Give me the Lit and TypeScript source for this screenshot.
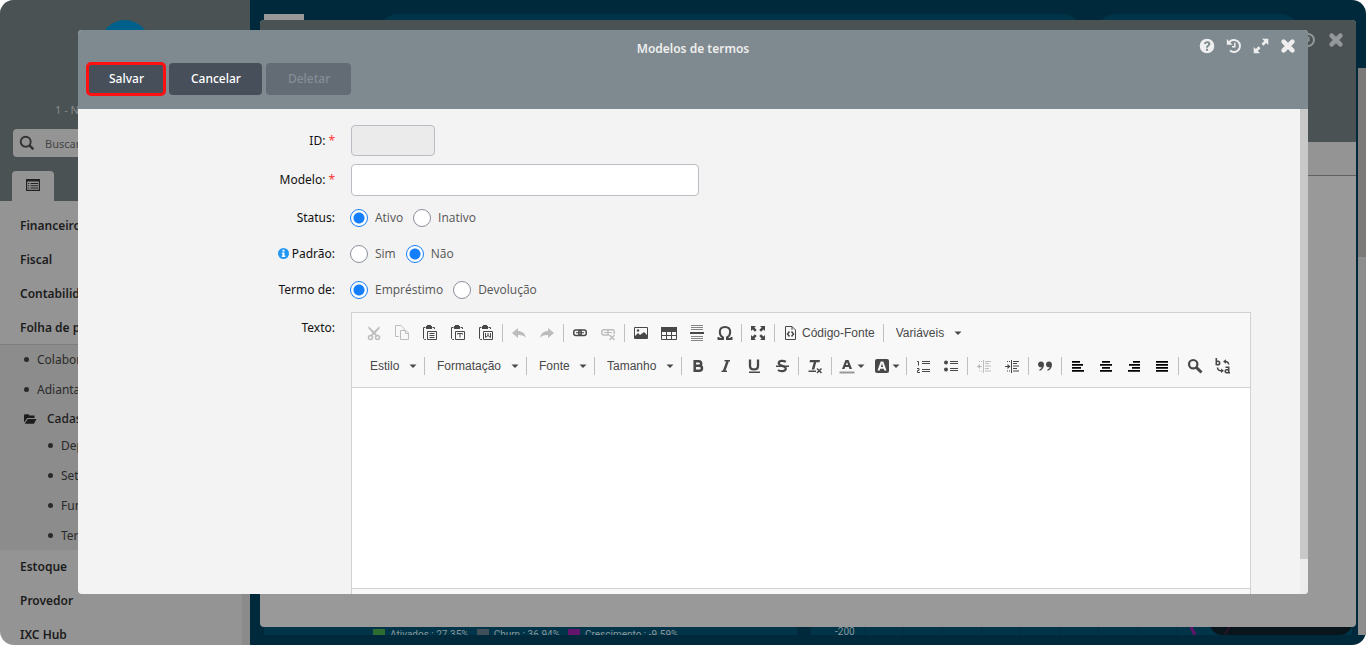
import { LitElement, html, css, svg, nothing, TemplateResult } from "lit";
import { customElement, property, state } from "lit/decorators.js";
import { classMap } from "lit/directives/class-map.js";

const glyphs: Record<string, TemplateResult> = {
  cut: svg`<g fill="none" stroke="currentColor" stroke-width="1.5"><circle cx="4.5" cy="12.5" r="2"/><circle cx="11.5" cy="12.5" r="2"/></g><path fill="currentColor" d="M2.5 1v2.4l4 4.6-2.3 3 1.4.6L8 9.2l2.4 2.4 1.4-.6L9.500 8l4-4.600V1L8 6.400z"/>`,
  copy: svg`<path fill="none" stroke="currentColor" d="M5 11.500H1.500v-11H7L10 3.500V5M6.500 5.500v9h8V8l-2.500-2.500zM11.500 5.500v3h3"/>`,
  paste: svg`<path fill="none" stroke="currentColor" d="M2.500 14.500H4M3.500 2.500h-2v11l1 1M10.500 2.500h2V4M5.500 6.500h9v8h-9zM7.500 8.500h5M7.500 10.500h5M7.500 12.500h5"/><path fill="currentColor" d="M4 1h1V0h4v1h1v3H4z"/>`,
  pasteText: svg`<path fill="none" stroke="currentColor" d="M2.500 14.500H4M3.500 2.500h-2v11l1 1M10.500 2.500h2V4M5.500 6.500h9v8h-9zM7.500 9.500v-1h5v1M10 8.500v4"/><path fill="currentColor" d="M4 1h1V0h4v1h1v3H4z"/>`,
  pasteWord: svg`<path fill="none" stroke="currentColor" d="M2.500 14.500H4M3.500 2.500h-2v11l1 1M10.500 2.500h2V4M5.500 6.500h9v8h-9zM7.500 8v4.500l2.500-2 2.500 2V8M10 8v3"/><path fill="currentColor" d="M4 1h1V0h4v1h1v3H4z"/>`,
  undo: svg`<path fill="currentColor" d="M1 8l6-5v3c4 0 7 2 8 7-2-2.600-4.500-3.200-8-3v3z"/>`,
  redo: svg`<path fill="currentColor" d="M15 8L9 3v3c-4 0-7 2-8 7 2-2.600 4.500-3.200 8-3v3z"/>`,
  link: svg`<g fill="none" stroke="currentColor" stroke-width="1.500"><rect x="1.800" y="5" width="7.400" height="5.500" rx="2"/><rect x="6.800" y="5" width="7.400" height="5.500" rx="2"/></g><path stroke="currentColor" d="M4 7.700h8"/>`,
  unlink: svg`<path fill="none" stroke="currentColor" stroke-width="1.500" d="M9 10H3.800a2 2 0 0 1-2-2V6.700a2 2 0 0 1 2-2h8.400a2 2 0 0 1 2 2V9M8 4.700V10"/><path stroke="currentColor" d="M4 7.500h8"/><path stroke="currentColor" stroke-width="1.500" d="M9.500 10l5 5M14.500 10l-5 5"/>`,
  image: svg`<path fill="none" stroke="currentColor" d="M1.500 2.500h13v11h-13z"/><path fill="currentColor" d="M2 13v-2l3-3 2 2 4-3 3 3v3z"/><circle cx="5" cy="5.500" r="1.200" fill="currentColor"/>`,
  table: svg`<path fill="none" stroke="currentColor" d="M.5 2.500h15v12H.5zM.5 6.500h15M.5 10.500h15M5.500 5v9.500M10.500 5v9.500"/><path fill="currentColor" d="M0 2h16v4H0z"/>`,
  rule: svg`<path stroke="currentColor" opacity=".65" d="M2 .5h12M2 2.500h12M2 4.500h12M2 11.500h12M2 13.500h12M2 15.500h12"/><path fill="currentColor" d="M1 7h14v2H1z"/>`,
  omega: svg`<path fill="none" stroke="currentColor" stroke-width="2" d="M1.500 12v2H6v-1.500C3.800 11.300 2.800 9.500 2.800 7c0-3 2-5 5.200-5s5.200 2 5.200 5c0 2.500-1 4.300-3.200 5.500V14h4.500v-2"/>`,
  maximize: svg`<path fill="currentColor" d="M1 1h5L4.400 2.600l2.300 2.300-1.800 1.800-2.300-2.300L1 6zM15 1v5l-1.600-1.600-2.300 2.300-1.800-1.800 2.300-2.300L10 1zM1 15v-5l1.600 1.600 2.300-2.300 1.800 1.800-2.300 2.300L6 15zM15 15h-5l1.600-1.600-2.300-2.300 1.800-1.800 2.300 2.300L15 10z"/>`,
  source: svg`<path fill="none" stroke="currentColor" d="M2.500 1.500H9l3.500 3.500v9.500h-10zM9 1.500V5"/><path fill="none" stroke="currentColor" stroke-width="1.500" d="M6.500 6.500l-2 2.500 2 2.500M8.500 6.500l2 2.500-2 2.500"/>`,
  bold: svg`<path fill="none" stroke="currentColor" stroke-width="2.500" d="M4.700 3.200h4c3.300 0 3.300 4.500 0 4.500h-4h4.500c3.700 0 3.700 5 0 5H4.700z"/>`,
  italic: svg`<path fill="none" stroke="currentColor" stroke-width="1.600" d="M6.500 2.800H12M3.500 13.200H9"/><path stroke="currentColor" stroke-width="2.400" d="M9.700 3L6 13"/>`,
  underline: svg`<path fill="none" stroke="currentColor" stroke-width="2.300" d="M4 1.500V8c0 4.600 8 4.600 8 0V1.500"/><path fill="currentColor" d="M3 13.500h11V15H3z"/>`,
  strike: svg`<path fill="none" stroke="currentColor" stroke-width="2.200" d="M11.800 3.900C9.500 2.300 4.700 2.300 4.700 5.300S11.800 7.500 11.800 10.600 6 13.700 4 12"/><path fill="currentColor" d="M2 7.500h13V9H2z"/>`,
  removeFormat: svg`<path fill="currentColor" d="M3 2h10l-.6 2.200h-3.200L7.300 11.500H4.700L6.800 4.200H2.500zM1.500 12.500H9V14H1.500z"/><path stroke="currentColor" stroke-width="1.500" d="M10 10.500l4.500 4.500M14.500 10.500L10 15"/>`,
  textColor: svg`<path fill="currentColor" fill-rule="evenodd" d="M3 11L6.500 2h3L13 11h-2.500l-.7-2H6.200l-.7 2zM6.900 7h2.200L8 4z"/><path fill="#999" d="M.5 13.500h15v2H.5z"/>`,
  backColor: svg`<rect x="1" y="1" width="14" height="14" rx="2" fill="currentColor"/><path fill="#f8f8f8" fill-rule="evenodd" d="M3.500 12.500L6.700 3.500h2.600l3.200 9h-2.200l-.6-1.800H6.300l-.6 1.800zM6.900 9h2.200L8 5.500z"/>`,
  ordered: svg`<path fill="none" stroke="currentColor" d="M7 3.500h8M7 5.500h8M7 11.500h8M7 13.500h8M2 3.500h1.500V7.500M2 10.500h2v2H2.500v2H5" />`,
  bullets: svg`<path stroke="currentColor" d="M7 3.500h8M7 5.500h8M7 10.500h8M7 12.500h8"/><circle cx="3" cy="4.500" r="2" fill="currentColor"/><circle cx="3" cy="11.500" r="2" fill="currentColor"/>`,
  outdent: svg`<path stroke="currentColor" d="M7.500 2v13M9 3.500h6M9 5.500h4M9 8h6M9 10.500h4M9 13h6M1 8.500h5"/><path stroke="currentColor" stroke-dasharray="1 1" d="M3 3.500h4M3 13h4"/><path fill="currentColor" d="M1 8.500L4 6v5z"/>`,
  indent: svg`<path stroke="currentColor" d="M7.500 2v13M9 3.500h6M9 5.500h4M9 8h6M9 10.500h4M9 13h6M1 8.500h5"/><path stroke="currentColor" stroke-dasharray="1 1" d="M3 3.500h4M3 13h4"/><path fill="currentColor" d="M6.500 8.500L3.500 6v5z"/>`,
  quote: svg`<path fill="currentColor" d="M4 3.500c2 0 3 1.400 3 3.300 0 3-1.800 5.200-4.500 6.200v-1.400c1.200-.6 2-1.400 2.200-2.300C2.600 9.600 1 8.500 1 6.500c0-1.800 1.300-3 3-3zM12 3.500c2 0 3 1.400 3 3.300 0 3-1.800 5.200-4.500 6.200v-1.400c1.200-.6 2-1.400 2.200-2.300-2.100.3-3.700-.8-3.700-2.800 0-1.800 1.300-3 3-3z"/>`,
  alignLeft: svg`<path fill="#000" d="M2 3h8v1.700H2zM2 6h11v1.700H2zM2 9h9v1.700H2zM2 12h12v1.700H2z"/>`,
  alignCenter: svg`<path fill="#000" d="M4 3h8v1.700H4zM2 6h12v1.700H2zM4 9h8v1.700H4zM2 12h12v1.700H2z"/>`,
  alignRight: svg`<path fill="#000" d="M7 3h7v1.700H7zM3 6h11v1.700H3zM6 9h8v1.700H6zM2 12h12v1.700H2z"/>`,
  alignJustify: svg`<path fill="#000" d="M2 3h12v1.700H2zM2 6h12v1.700H2zM2 9h12v1.700H2zM2 12h12v1.700H2z"/>`,
  find: svg`<circle cx="6.200" cy="6.200" r="4.200" fill="none" stroke="currentColor" stroke-width="2.200"/><path stroke="currentColor" stroke-width="3" d="M9.500 9.500l5 5"/>`,
  search: svg`<circle cx="6.700" cy="6.700" r="5" fill="none" stroke="currentColor" stroke-width="1.900"/><path stroke="currentColor" stroke-width="2.400" stroke-linecap="round" d="M10.700 10.700l3 3"/>`,
  replace: svg`<path fill="none" stroke="currentColor" stroke-width="1.600" d="M1.300 0v7.200M1.300 6.700H3c2.200 0 2.200-3.500 0-3.500H1.300M10.500 9.300h3.200v6M13.700 11.800h-2c-2 0-2 2.900 0 2.900h3.300M9.500 3.500c2.500-.3 4 .8 4.200 3M2.500 9.500c.2 2.200 1.700 3.500 4.500 3.300"/><path fill="currentColor" d="M8 3.500l3-2.200v4.400zM9 12.800l-3-2.200V15z"/>`,
  caret: svg`<path fill="currentColor" d="M4.500 6.500h7L8 10z"/>`,
  help: svg`<path fill="currentColor" fill-rule="evenodd" d="M8 .7a7.300 7.300 0 1 1 0 14.600A7.300 7.300 0 0 1 8 .7zM5 6h2c0-1.500 2.200-1.500 2.200 0 0 1.200-2.200 1.300-2.200 3.700h2c0-1.500 2.400-1.800 2.400-4C11.400 2.400 5 2.400 5 6zm2 4.800v2h2v-2z"/>`,
  history: svg`<path fill="none" stroke="currentColor" stroke-width="2" d="M3.200 4.300A6 6 0 1 1 4 12.500"/><path fill="currentColor" d="M.8 1v5.800h5.800z"/><path fill="none" stroke="currentColor" stroke-width="1.500" d="M8.800 4.800v3.900H6"/>`,
  expand: svg`<path fill="currentColor" d="M9 .7h6.300V7L13.200 4.900l-2.800 2.800L8.500 5.800l2.800-2.800zM7 15.300H.7V9l2.100 2.100 2.800-2.800 1.900 1.900L4.700 13z"/>`,
  close: svg`<path stroke="currentColor" stroke-width="4.600" stroke-linecap="round" d="M3.600 3.600l8.800 8.800M12.400 3.600l-8.800 8.800"/>`,
  list: svg`<path fill="none" stroke="currentColor" stroke-width="1.200" d="M1.600 2.600h12.800v10.800H1.600z"/><path fill="currentColor" d="M1 2h14v2.500H1zM3 6h1.300v1H3zM3 8.300h1.300v1H3zM3 10.600h1.300v1H3zM5.500 6H13v1H5.500zM5.500 8.300H13v1H5.500zM5.500 10.600H13v1H5.500z"/>`,
  folder: svg`<path fill="currentColor" d="M2 11.500V4l.8-.8h3.700l1 1.300h5V7H5.300zM2.800 12.800L5.700 8H14.500l-2.600 4.800z"/>`,
  info: svg`<circle cx="8" cy="8" r="8" fill="#2196f3"/><path fill="#fff" d="M6.500 2.500h3v2.500h-3zM5.500 6.500h4V11h1v2h-5v-2h1V8.500h-1z"/>`,
};

@customElement("app-icon")
export class AppIcon extends LitElement {
  static styles = css`
    :host { display: inline-flex; width: 16px; height: 16px; flex: none; }
    .glyph { width: 100%; height: 100%; display: block; }
  `;
  @property() name = "";
  render() {
    return html`<svg class="glyph" viewBox="0 0 16 16" aria-hidden="true">${glyphs[this.name]}</svg>`;
  }
}

@customElement("side-menu")
export class SideMenu extends LitElement {
  static styles = css`
    :host { display: flex; flex-direction: column; width: 250px; flex: none; background: #949494; color: #1c1c1c; font-size: 12px; box-shadow: inset -8px 0 #8b8b8b; }
    .head { background: #4a5254; display: flex; flex-direction: column; padding-top: 20px; }
    .avatar { width: 50px; height: 50px; border-radius: 50%; background: #00608c; align-self: center; }
    .branch { margin: 32px 0 0 55px; font-size: 11px; line-height: 16px; color: #858a8b; }
    .search { margin: 11px 13px 0; height: 28px; display: flex; align-items: center; gap: 10px; padding-left: 6px; background: #949494; border-radius: 4px; color: #333; }
    .search input { flex: 1; min-width: 0; border: 0; background: none; padding: 0; font: 11px "Noto Sans", sans-serif; outline: none; }
    .search input::placeholder { color: #444; }
    .tab { margin: 14px 0 0 12px; width: 42px; height: 30px; display: grid; place-items: center; border: 0; padding: 0; border-radius: 4px 4px 0 0; background: #949494; color: #222; }
    .tab app-icon { margin-bottom: 3px; }
    .nav { padding-top: 8px; }
    .group { display: block; padding-left: 20px; line-height: 34px; font-weight: 600; color: inherit; text-decoration: none; }
    .sub { background: #8c8c8c; border-top: 1px solid #7e7e7e; margin-top: -1px; }
    .item { display: flex; align-items: center; gap: 8px; height: 30px; box-sizing: border-box; padding: 0 0 2px 24px; color: #2a2a2a; text-decoration: none; }
    .item::before { content: ""; width: 5px; height: 5px; border-radius: 50%; background: currentColor; }
    .deep { padding: 0 0 0 48px; }
    .folder { gap: 9px; height: 25px; padding: 2px 0 0 22px; font-weight: 500; color: #1c1c1c; }
    .folder::before { content: none; }
  `;
  render() {
    const group = (t: string) => html`<a class="group" href="#">${t}</a>`;
    const item = (t: string, deep = false) => html`<a class=${classMap({ item: true, deep })} href="#">${t}</a>`;
    return html`
      <div class="head">
        <div class="avatar"></div>
        <div class="branch">1 - Nome</div>
        <label class="search"><app-icon name="search"></app-icon><input aria-label="Buscar" placeholder="Buscar" /></label>
        <button class="tab" aria-label="Menu"><app-icon name="list"></app-icon></button>
      </div>
      <nav class="nav">
        ${["Financeiro", "Fiscal", "Contabilidade", "Folha de pagamento"].map(group)}
        <div class="sub">
          ${item("Colaboradores")}${item("Adiantamentos")}
          <a class="item folder" href="#"><app-icon name="folder"></app-icon>Cadastros</a>
          ${["Departamentos", "Setores", "Funções", "Termos"].map((t) => item(t, true))}
        </div>
        ${["Estoque", "Provedor", "IXC Hub"].map(group)}
      </nav>`;
  }
}

@customElement("dash-board")
export class DashBoard extends LitElement {
  static styles = css`
    :host { flex: 1; min-width: 0; display: flex; background: #00293c; font: 10px Roboto, sans-serif; color: #8b979c; }
    .main { flex: 1; min-width: 0; display: flex; flex-direction: column; justify-content: space-between; padding: 14px 6px 10px 14px; }
    .top { display: grid; grid-template-columns: 40px 1fr 204px; gap: 14px; padding-right: 52px; height: 40px; }
    .block { background: #999; }
    .pill { background: #003549; border-radius: 20px; }
    .wide { margin-left: 60px; }
    .bottom { display: grid; grid-template-columns: 533px 1fr; gap: 14px; }
    .card { background: #003549; height: 30px; overflow: hidden; display: flex; }
    .legend { align-items: flex-end; gap: 8px; padding-left: 109px; }
    .key { display: flex; align-items: center; gap: 5px; line-height: 12px; margin-bottom: -6px; }
    .swatch { width: 12px; height: 12px; flex: none; }
    .green { background: #2d6e30; }
    .gray { background: #40505a; }
    .purple { background: #64146a; }
    .chart { align-items: flex-end; }
    .tick { padding: 0 9px 0 24px; line-height: 10px; margin-bottom: -2px; }
    .plot { flex: 1; height: 100%; background: repeating-linear-gradient(90deg, #002d40 0 1px, #003549 1px 39px); display: flex; justify-content: flex-end; }
    .line { width: 20px; height: 100%; }
    .dark { width: 142px; height: 100%; border-radius: 0 0 12px 12px; background: #08161b; }
    .faint { width: 40px; height: 100%; display: block; }
    .scroll { width: 8px; margin: 68px 0 10px; background: #8e8e8e; }
    .thumb { height: 189px; background: #7c7979; }
  `;
  render() {
    const key = (color: string, text: string) => html`<span class="key"><span class="swatch ${color}"></span>${text}</span>`;
    return html`
      <div class="main">
        <div class="top"><div class="block"></div><div class="pill wide"></div><div class="pill"></div></div>
        <div class="bottom">
          <div class="card legend">
            ${key("green", "Ativados : 27.35%")}${key("gray", "Churn : 36.94%")}${key("purple", "Crescimento : -9.59%")}
          </div>
          <div class="card chart">
            <span class="tick">-200</span>
            <div class="plot"><svg class="line" viewBox="0 0 20 30"><path d="M0 20l5 10" stroke="#64146a" stroke-width="3" /></svg></div>
            <div class="dark"><svg class="faint" viewBox="0 0 40 30"><path d="M15 30l5-10" stroke="#1f1428" stroke-width="3" /></svg></div>
          </div>
        </div>
      </div>
      <div class="scroll"><div class="thumb"></div></div>`;
  }
}

@customElement("rich-editor")
export class RichEditor extends LitElement {
  static styles = css`
    :host { display: block; border: 1px solid #d1d1d1; color: #484848; font: 12px "Liberation Sans", Arial, sans-serif; background: #fff; }
    .bar { background: #f8f8f8; border-bottom: 1px solid #d1d1d1; padding: 3px 8px 5px; }
    .row { display: flex; align-items: center; height: 33px; }
    .tool { display: flex; align-items: center; gap: 3px; border: 0; background: none; padding: 0 6px; height: 28px; font: inherit; color: inherit; flex: none; white-space: nowrap; }
    .tool:disabled { color: #bdbdbd; }
    .split { gap: 0; width: 35px; padding: 0 0 0 5px; }
    .split .arrow { margin: 0 -3px 0 -2px; }
    .sep { width: 1px; height: 18px; margin: 0 2px; background: #c0c0c0; flex: none; }
    .combo { position: relative; display: flex; align-items: center; flex: none; }
    .combo select { appearance: none; border: 0; background: none; font: inherit; color: inherit; padding: 0 22px 0 10px; height: 28px; outline: none; }
    .combo app-icon { position: absolute; right: 1px; pointer-events: none; }
    .area { display: block; width: 100%; height: 200px; box-sizing: border-box; border: 0; resize: none; outline: none; padding: 12px; }
    .foot { height: 28px; background: #f8f8f8; border-top: 1px solid #d1d1d1; }
  `;
  render() {
    const sep = html`<span class="sep"></span>`;
    const tool = (name: string, label: string, off = false, text = "") =>
      html`<button class="tool" title=${label} aria-label=${label} ?disabled=${off}><app-icon name=${name}></app-icon>${text || nothing}</button>`;
    const split = (name: string, label: string) =>
      html`<button class="tool split" aria-label=${label}><app-icon name=${name}></app-icon><app-icon class="arrow" name="caret"></app-icon></button>`;
    const combo = (t: string) =>
      html`<span class="combo"><select aria-label=${t}><option>${t}</option></select><app-icon name="caret"></app-icon></span>`;
    return html`
      <div class="bar" role="toolbar">
        <div class="row">
          ${tool("cut", "Recortar", true)}${tool("copy", "Copiar", true)}${tool("paste", "Colar")}${tool("pasteText", "Colar como texto")}${tool("pasteWord", "Colar do Word")}${sep}
          ${tool("undo", "Desfazer", true)}${tool("redo", "Refazer", true)}${sep}
          ${tool("link", "Link")}${tool("unlink", "Remover link", true)}${sep}
          ${tool("image", "Imagem")}${tool("table", "Tabela")}${tool("rule", "Linha horizontal")}${tool("omega", "Caractere especial")}${sep}
          ${tool("maximize", "Maximizar")}${sep}${tool("source", "Código-Fonte", false, "Código-Fonte")}${sep}${combo("Variáveis")}
        </div>
        <div class="row">
          ${combo("Estilo")}${sep}${combo("Formatação")}${sep}${combo("Fonte")}${sep}${combo("Tamanho")}${sep}
          ${tool("bold", "Negrito")}${tool("italic", "Itálico")}${tool("underline", "Sublinhado")}${tool("strike", "Tachado")}${sep}
          ${tool("removeFormat", "Remover formatação")}${sep}
          ${split("textColor", "Cor do texto")}${split("backColor", "Cor do fundo")}${sep}
          ${tool("ordered", "Lista numerada")}${tool("bullets", "Lista")}${sep}
          ${tool("outdent", "Diminuir recuo", true)}${tool("indent", "Aumentar recuo")}${sep}
          ${tool("quote", "Citação")}${sep}
          ${tool("alignLeft", "Esquerda")}${tool("alignCenter", "Centralizar")}${tool("alignRight", "Direita")}${tool("alignJustify", "Justificar")}${sep}
          ${tool("find", "Localizar")}${tool("replace", "Substituir")}
        </div>
      </div>
      <textarea class="area" aria-label="Texto"></textarea>
      <div class="foot"></div>`;
  }
}

@customElement("app-root")
export class AppRoot extends LitElement {
  static styles = css`
    :host { display: block; font: 12px "Noto Sans", sans-serif; background: #fff; }
    .page { position: relative; display: flex; height: 100vh; overflow: hidden; border-radius: 14px; }
    .window { position: absolute; display: flex; flex-direction: column; border-radius: 4px; overflow: hidden; }
    .behind { inset: 20px 10px 18px 260px; background: #999; }
    .behind-head { height: 122px; background: #4a5254; display: flex; justify-content: flex-end; gap: 12px; padding: 12px 12px 0 0; box-sizing: border-box; color: #959898; }
    .behind-bar { height: 33px; background: #949494; border-bottom: 1px solid #606060; }
    .modal { inset: 30px 58px 51px 78px; background: #f3f3f3; }
    .head { background: #7e8a8f; height: 79px; flex: none; color: #eee; }
    .titlebar { display: grid; grid-template-columns: 1fr auto 1fr; align-items: center; height: 30px; padding-top: 3px; }
    .title { grid-column: 2; margin: 0; font-size: 12px; font-weight: 600; }
    .icons { display: flex; justify-content: flex-end; gap: 11px; padding: 0 12px 4px 0; }
    .icon { display: flex; border: 0; padding: 0; background: none; color: inherit; }
    .actions { display: flex; gap: 4px; padding-left: 9px; }
    .action { height: 32px; border: 0; border-radius: 4px; padding: 0 21px 2px 22px; background: #464f5a; color: #fff; font: 500 12px "Noto Sans", sans-serif; }
    .action:disabled { background: #636b75; color: #868d96; }
    .marked { outline: 3px solid #f11; outline-offset: -2px; }
    .body { flex: 1; min-height: 0; display: flex; }
    .form { flex: 1; min-width: 0; overflow: hidden; padding: 16px 49px 0 0; display: flex; flex-direction: column; gap: 4px; }
    .track { width: 8px; background: #ececec; }
    .thumb { height: 450px; background: #c8c8c8; }
    .field { display: grid; grid-template-columns: 257px 1fr; column-gap: 16px; align-items: center; border: 0; margin: 0; padding: 0; min-width: 0; flex: none; }
    .name { display: flex; justify-content: flex-end; align-items: center; gap: 3px; padding-bottom: 2px; color: #111; }
    .req { color: #f33; }
    .text { height: 32px; box-sizing: border-box; border: 1px solid #b9bec4; border-radius: 4px; background: #fff; padding: 0 8px; font: inherit; outline: none; }
    .text:disabled { background: #ebebeb; }
    .short { width: 84px; height: 31px; margin-bottom: 4px; }
    .long { width: 348px; max-width: 100%; }
    .options { display: flex; flex-direction: column; }
    .choice { height: 36px; }
    .radios { display: flex; gap: 10px; margin-left: -1px; font-family: "Open Sans", "Noto Sans", sans-serif; }
    .radio { display: flex; align-items: center; gap: 7px; color: #555; }
    .caption { padding-bottom: 2px; }
    .dot { appearance: none; width: 18px; height: 18px; margin: 0; border: 1px solid #8a9099; border-radius: 50%; background: #fff; }
    .dot:checked { border-color: #157efb; background: radial-gradient(circle, #157efb 5px, #fff 6px); }
    .tip { width: 11px; height: 11px; }
    .top { align-items: start; }
    .top .name { height: 30px; }
    .short-name { padding-bottom: 4px; }
  `;
  @state() private picked: Record<string, string> = { status: "Ativo", padrao: "Não", termo: "Empréstimo" };

  private choice(key: string, label: string, options: string[], tip = false) {
    return html`<div class="field choice" role="radiogroup" aria-label=${label}>
      <span class="name">${tip ? html`<app-icon class="tip" name="info"></app-icon>` : nothing}${label}:</span>
      <div class="radios">
        ${options.map(
          (o) => html`<label class="radio"><input class="dot" type="radio" name=${key} .checked=${this.picked[key] === o}
            @change=${() => (this.picked = { ...this.picked, [key]: o })} /><span class="caption">${o}</span></label>`
        )}
      </div>
    </div>`;
  }

  render() {
    const icon = (name: string, label: string) =>
      html`<button class="icon" aria-label=${label}><app-icon name=${name}></app-icon></button>`;
    return html`<div class="page">
      <side-menu></side-menu>
      <dash-board></dash-board>
      <section class="window behind">
        <div class="behind-head"><app-icon name="history"></app-icon><app-icon name="close"></app-icon></div>
        <div class="behind-bar"></div>
      </section>
      <section class="window modal" role="dialog" aria-labelledby="title">
        <header class="head">
          <div class="titlebar">
            <h1 class="title" id="title">Modelos de termos</h1>
            <div class="icons">${icon("help", "Ajuda")}${icon("history", "Histórico")}${icon("expand", "Expandir")}${icon("close", "Fechar")}</div>
          </div>
          <div class="actions">
            <button class="action marked">Salvar</button><button class="action">Cancelar</button><button class="action" disabled>Deletar</button>
          </div>
        </header>
        <div class="body">
          <form class="form">
            <div class="field">
              <label class="name short-name" for="id">ID: <span class="req">*</span></label>
              <input class="text short" id="id" disabled />
            </div>
            <div class="field">
              <label class="name" for="modelo">Modelo: <span class="req">*</span></label>
              <input class="text long" id="modelo" />
            </div>
            <div class="options">
              ${this.choice("status", "Status", ["Ativo", "Inativo"])}
              ${this.choice("padrao", "Padrão", ["Sim", "Não"], true)}
              ${this.choice("termo", "Termo de", ["Empréstimo", "Devolução"])}
            </div>
            <div class="field top">
              <span class="name">Texto:</span>
              <rich-editor></rich-editor>
            </div>
          </form>
          <div class="track"><div class="thumb"></div></div>
        </div>
      </section>
    </div>`;
  }
}
